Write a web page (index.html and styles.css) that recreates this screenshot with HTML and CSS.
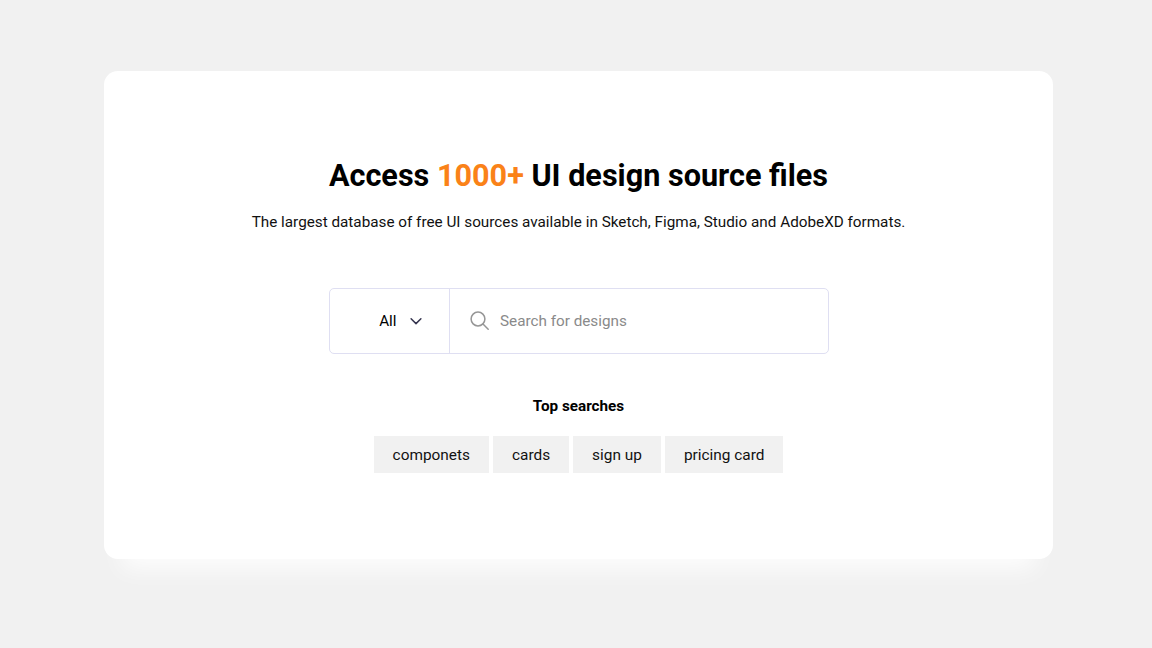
FILE: index.html
```html
<!DOCTYPE html>
<html lang="en">
<head>
    <meta charset="UTF-8">
    <meta name="viewport" content="width=device-width, initial-scale=1.0">
    <title>UI design source files</title>
    <link rel="stylesheet" href="styles.css">
</head>
<body>
    <main class="card">
        <h1>Access <span class="accent">1000+</span> UI design source files</h1>
        <p class="subtitle">The largest database of free UI sources available in Sketch, Figma, Studio and AdobeXD formats.</p>

        <form class="search">
            <button type="button" class="filter">
                <span>All</span>
                <svg class="chevron" width="12" height="8" viewBox="0 0 12 8" fill="none">
                    <path d="M1.1 1.7l4.9 4.9 4.9-4.9" stroke="#36354f" stroke-width="1.5" stroke-linecap="round" stroke-linejoin="round"/>
                </svg>
            </button>
            <label class="field">
                <svg width="20" height="20" viewBox="0 0 20 20" fill="none">
                    <circle cx="8" cy="8" r="6.9" stroke="#969696" stroke-width="1.5"/>
                    <path d="M13 13l5.2 5.2" stroke="#969696" stroke-width="1.5" stroke-linecap="round"/>
                </svg>
                <input type="text" placeholder="Search for designs">
            </label>
        </form>

        <h2>Top searches</h2>
        <div class="tags">
            <a class="tag">componets</a>
            <a class="tag">cards</a>
            <a class="tag">sign up</a>
            <a class="tag">pricing card</a>
        </div>
    </main>
</body>
</html>
```

FILE: styles.css
```css
* {
    box-sizing: border-box;
}
body {
    margin: 0;
    height: 648px;
    padding: 71px 99px 0 104px;
    overflow: hidden;
    background: #f1f1f1;
    font-family: Roboto, sans-serif;
    color: #000;
}
.card {
    height: 488px;
    padding-top: 85px;
    display: flex;
    flex-direction: column;
    align-items: center;
    background: #fff;
    border-radius: 14px;
    box-shadow: 0 28px 22px -18px rgba(255, 255, 255, 0.85);
}
h1 {
    margin: 0;
    font-size: 30.6px;
    line-height: 40px;
    font-weight: 700;
    white-space: nowrap;
}
.accent {
    color: #fa8218;
}
.subtitle {
    margin: 16px 0 0;
    font-size: 15.27px;
    line-height: 20px;
    white-space: nowrap;
    color: #111;
}
.search {
    display: flex;
    width: 500px;
    height: 66px;
    margin-top: 56px;
    border: 1px solid #dfdff2;
    border-radius: 5px;
}
.filter {
    width: 120px;
    padding: 0 27px 0 0;
    display: flex;
    align-items: center;
    justify-content: flex-end;
    gap: 13px;
    border: 0;
    border-right: 1px solid #dfdff2;
    background: none;
    font: 15.25px Roboto, sans-serif;
    color: #000;
}
.field {
    flex: 1;
    display: flex;
    align-items: center;
    padding-left: 20px;
    gap: 10.5px;
}
.field input {
    flex: 1;
    padding: 0;
    border: 0;
    outline: 0;
    background: none;
    font: 15.27px Roboto, sans-serif;
}
.field input::placeholder {
    color: #8a8a8a;
}
h2 {
    margin: 42px 0 0;
    font-size: 15.25px;
    line-height: 20px;
    font-weight: 700;
}
.tags {
    display: flex;
    gap: 4px;
    margin-top: 20px;
}
.tag {
    height: 37px;
    padding: 0 19px;
    background: #f1f1f1;
    font-size: 15.4px;
    line-height: 38px;
    color: #111;
}
```
